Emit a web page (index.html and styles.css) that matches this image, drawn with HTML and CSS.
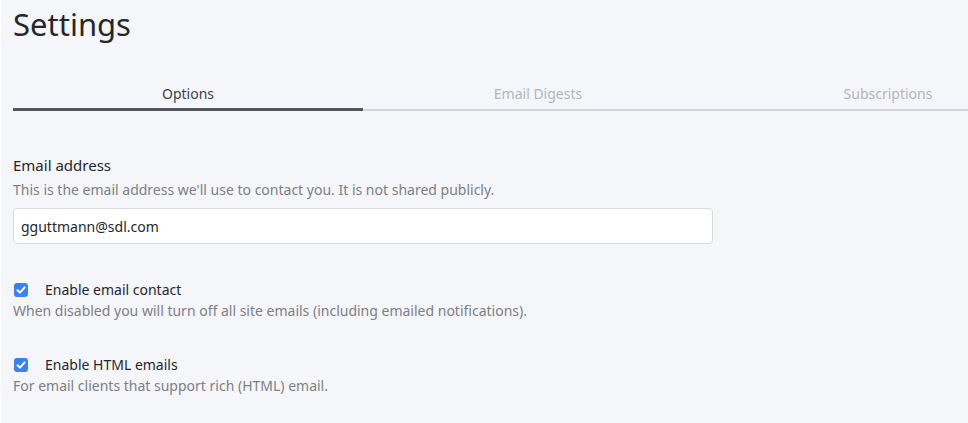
FILE: index.html
```html
<!DOCTYPE html>
<html>
<head>
<meta charset="utf-8">
<link rel="stylesheet" href="styles.css">
</head>
<body>
<div class="page">
  <h1 class="title">Settings</h1>
  <div class="tabs">
    <div class="tab active">Options</div>
    <div class="tab">Email Digests</div>
    <div class="tab">Subscriptions</div>
  </div>
  <div class="field">
    <div class="label">Email address</div>
    <div class="help">This is the email address we'll use to contact you. It is not shared publicly.</div>
    <div class="input">gguttmann@sdl.com</div>
  </div>
  <div class="check">
    <div class="check-row">
      <span class="box"><svg viewBox="0 0 14 14" width="14" height="14"><path d="M3.5 7.2 L6 9.6 L10.6 4.4" fill="none" stroke="#fff" stroke-width="2" stroke-linecap="round" stroke-linejoin="round"/></svg></span>
      <span class="check-label">Enable email contact</span>
    </div>
    <div class="help">When disabled you will turn off all site emails (including emailed notifications).</div>
  </div>
  <div class="check">
    <div class="check-row">
      <span class="box"><svg viewBox="0 0 14 14" width="14" height="14"><path d="M3.5 7.2 L6 9.6 L10.6 4.4" fill="none" stroke="#fff" stroke-width="2" stroke-linecap="round" stroke-linejoin="round"/></svg></span>
      <span class="check-label">Enable HTML emails</span>
    </div>
    <div class="help">For email clients that support rich (HTML) email.</div>
  </div>
</div>
</body>
</html>
```
FILE: styles.css
```css
html, body {
  margin: 0;
  padding: 0;
  background: #f5f6fa;
  overflow: hidden;
}
body {
  font-family: "Noto Sans", "Open Sans", sans-serif;
  color: #25272c;
  border-left: 1px solid #ffffff;
  height: 423px;
  box-sizing: border-box;
}
.page {
  padding: 0 0 0 12px;
  overflow: hidden;
}
.title {
  margin: 0;
  padding-top: 2px;
  font-size: 31px;
  font-weight: 400;
  line-height: 44px;
  color: #25272c;
}
.tabs {
  display: flex;
  margin-top: 38px;
}
.tab {
  flex: 0 0 350px;
  text-align: center;
  font-size: 14px;
  color: #b3b5ba;
  line-height: 20px;
  padding-bottom: 5px;
  border-bottom: 2px solid #d4d5da;
}
.tab.active {
  color: #3d3f44;
  border-bottom: 2px solid #55575c;
  box-shadow: inset 0 -1px 0 #55575c;
}
.field {
  margin-top: 44px;
}
.label {
  font-size: 15px;
  line-height: 20px;
  color: #25272c;
}
.help {
  font-size: 14px;
  line-height: 20px;
  color: #7d7f84;
}
.field .help {
  margin-top: 5px;
}
.input {
  margin-top: 8px;
  box-sizing: border-box;
  width: 700px;
  height: 36px;
  background: #fff;
  border: 1px solid #d9dadf;
  border-radius: 4px;
  padding: 0 7px;
  display: flex;
  align-items: center;
  font-size: 14px;
  color: #25272c;
}
.check {
  margin-top: 36px;
}
.check + .check {
  margin-top: 34px;
}
.check-row {
  display: flex;
  align-items: center;
  gap: 17px;
  padding-left: 1px;
}
.box {
  width: 14px;
  height: 14px;
  border-radius: 3px;
  background: #3a82f0;
  display: flex;
}
.check-label {
  font-size: 14px;
  line-height: 20px;
  color: #25272c;
}
.check .help {
  margin-top: 1px;
}
```
